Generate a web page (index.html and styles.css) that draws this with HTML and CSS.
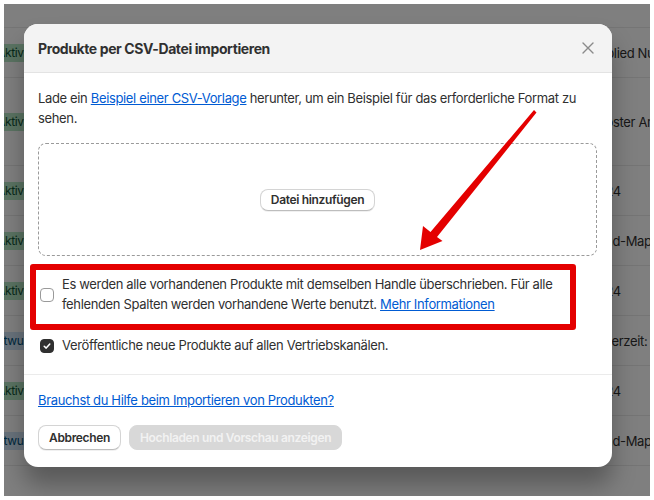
FILE: index.html
```html
<!DOCTYPE html>
<html>
<head>
    <title>Produkte importieren</title>
    <link rel="stylesheet" href="styles.css">
</head>
<body>
    <div class="screen">
        <!-- Page behind the dialog -->
        <div class="page">
            <div class="row head"></div>
            <div class="row">
                <div class="cell"><span class="badge success">Aktiv</span></div>
                <div class="cell right">Applied Nutrition</div>
            </div>
            <div class="row tall">
                <div class="cell"><span class="badge success">Aktiv</span></div>
                <div class="cell right">Booster Artikel</div>
            </div>
            <div class="row">
                <div class="cell"><span class="badge success">Aktiv</span></div>
                <div class="cell right">2024</div>
            </div>
            <div class="row">
                <div class="cell"><span class="badge success">Aktiv</span></div>
                <div class="cell right">Band-Map</div>
            </div>
            <div class="row">
                <div class="cell"><span class="badge success">Aktiv</span></div>
                <div class="cell right">2024</div>
            </div>
            <div class="row">
                <div class="cell"><span class="badge info">Entwurf</span></div>
                <div class="cell right">Lagerzeit:</div>
            </div>
            <div class="row">
                <div class="cell"><span class="badge success">Aktiv</span></div>
                <div class="cell right">2024</div>
            </div>
            <div class="row">
                <div class="cell"><span class="badge info">Entwurf</span></div>
                <div class="cell right">Band-Map</div>
            </div>
            <div class="row"></div>
        </div>
        <div class="backdrop"></div>

        <!-- Import dialog -->
        <div class="modal">
            <div class="modal-header">
                <h2>Produkte per CSV-Datei importieren</h2>
                <button class="close" aria-label="Schließen">
                    <svg width="20" height="20" viewBox="0 0 20 20"><path d="M5 5L15 15M15 5L5 15" stroke="#8a8a8a" stroke-width="1.4" stroke-linecap="round"/></svg>
                </button>
            </div>
            <div class="modal-body">
                <p class="intro">Lade ein <a href="#">Beispiel einer CSV-Vorlage</a> herunter, um ein Beispiel für das erforderliche Format zu sehen.</p>
                <div class="dropzone">
                    <button class="btn slim">Datei hinzufügen</button>
                </div>
                <label class="check overwrite">
                    <span class="box"></span>
                    <span>Es werden alle vorhandenen Produkte mit demselben Handle überschrieben. Für alle fehlenden Spalten werden vorhandene Werte benutzt. <a href="#">Mehr Informationen</a></span>
                    <span class="annot"></span>
                </label>
                <label class="check publish">
                    <span class="box checked">
                        <svg width="10" height="10" viewBox="0 0 10 10"><path d="M2.2 5.2L4.2 7.1L7.8 3" fill="none" stroke="#fff" stroke-width="1.5" stroke-linecap="round" stroke-linejoin="round"/></svg>
                    </span>
                    <span>Veröffentliche neue Produkte auf allen Vertriebskanälen.</span>
                </label>
            </div>
            <div class="modal-footer">
                <a href="#" class="help">Brauchst du Hilfe beim Importieren von Produkten?</a>
                <div class="actions">
                    <button class="btn">Abbrechen</button>
                    <button class="btn primary" disabled>Hochladen und Vorschau anzeigen</button>
                </div>
            </div>
        </div>

        <!-- Red annotation arrow -->
        <svg class="arrow" width="646" height="492" viewBox="4 4 646 492">
            <polygon points="534,110 536.5,112.5 437,237 442.5,241 420,250 423,226 430.5,232" fill="#e40000"/>
        </svg>
    </div>
</body>
</html>
```

FILE: styles.css
```css
body {
    margin: 0;
    background: #fff;
    font-family: 'Inter', 'Noto Sans', sans-serif;
    color: #303030;
    letter-spacing: -0.35px;
}
.screen {
    position: relative;
    margin: 4px;
    width: 646px;
    height: 492px;
    overflow: hidden;
}
.page {
    background: #fff;
    height: 100%;
}
.row {
    display: grid;
    grid-template-columns: 1fr 62px;
    align-items: center;
    height: 50px;
    box-sizing: border-box;
    border-bottom: 1px solid #ebebeb;
    font-size: 13px;
}
.row.head {
    height: 24px;
}
.row.tall {
    height: 88px;
}
.cell {
    white-space: nowrap;
}
.cell.right {
    padding-left: 2px;
}
.badge {
    display: inline-block;
    padding: 1px 6px;
    border-radius: 6px;
    font-size: 12px;
    line-height: 16px;
}
.badge.success {
    background: #b4e6c4;
    color: #0c5132;
    margin-left: -13px;
}
.badge.info {
    background: #d0e4f7;
    color: #00527c;
    margin-left: -20px;
}
.backdrop {
    position: absolute;
    inset: 0;
    background: rgba(0, 0, 0, 0.5);
}
.modal {
    position: absolute;
    left: 20px;
    top: 20px;
    width: 588px;
    background: #fff;
    border-radius: 14px;
    overflow: hidden;
    box-shadow: 0 18px 24px rgba(0, 0, 0, 0.3);
}
.modal-header {
    display: flex;
    align-items: center;
    justify-content: space-between;
    height: 48px;
    padding: 0 14px;
    background: #f3f3f3;
    border-bottom: 1px solid #e3e3e3;
}
.modal-header h2 {
    margin: 0;
    font-size: 14px;
    font-weight: 650;
    letter-spacing: -0.4px;
}
.close {
    display: flex;
    padding: 0;
    border: none;
    background: none;
}
.modal-body {
    padding: 16px 15px 18px 14px;
    font-size: 13px;
    line-height: 19.5px;
    border-bottom: 1px solid #ebebeb;
}
.intro {
    margin: 0;
}
a {
    color: #005bd3;
}
.dropzone {
    display: flex;
    align-items: center;
    justify-content: center;
    height: 113px;
    margin-top: 15px;
    box-sizing: border-box;
    border: 1px dashed #9a9a9a;
    border-radius: 8px;
}
.btn {
    height: 25px;
    padding: 0 10px;
    font-family: inherit;
    font-size: 12px;
    font-weight: 600;
    letter-spacing: -0.35px;
    color: #303030;
    background: #fff;
    border: 1px solid #d4d4d4;
    border-bottom-color: #bdbdbd;
    border-radius: 8px;
    box-shadow: 0 1px 0 rgba(0, 0, 0, 0.06);
}
.btn.slim {
    height: 22px;
}
.btn.primary {
    background: #d8d8d8;
    border-color: #d8d8d8;
    color: #f2f2f2;
    box-shadow: none;
}
.check {
    position: relative;
    display: flex;
    align-items: center;
    gap: 8.5px;
}
.check.overwrite {
    margin-top: 19px;
}
.check.publish {
    margin-top: 22px;
}
.box {
    flex: none;
    display: flex;
    align-items: center;
    justify-content: center;
    width: 14px;
    height: 14px;
    margin-left: 1.5px;
    box-sizing: border-box;
    border: 1px solid #9a9a9a;
    border-radius: 4px;
}
.box.checked {
    background: #303030;
    border-color: #303030;
}
.annot {
    position: absolute;
    left: -8px;
    top: -11px;
    width: 546px;
    height: 66px;
    box-sizing: border-box;
    border: 6px solid #e40000;
    border-radius: 3px;
}
.modal-footer {
    padding: 16px 14px 17px;
    font-size: 13px;
    line-height: 19.5px;
}
.actions {
    display: flex;
    gap: 8px;
    margin-top: 15px;
}
.arrow {
    position: absolute;
    left: 0;
    top: 0;
}
```
